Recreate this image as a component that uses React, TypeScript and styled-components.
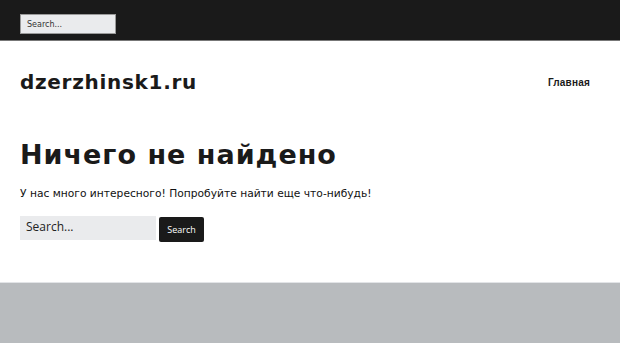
import React from "react";
import styled, { createGlobalStyle } from "styled-components";

const Global = createGlobalStyle`
  html, body { margin: 0; padding: 0; background: #ffffff; }
  body { font-family: "DejaVu Sans", Verdana, sans-serif; color: #1a1a1a; }
  * { box-sizing: border-box; }
`;

const Page = styled.div`
  display: flex;
  flex-direction: column;
  min-height: 343px;
`;

const TopBar = styled.div`
  height: 41px;
  background: #1a1a1a;
  border-bottom: 1px solid #777;
  display: flex;
  align-items: flex-start;
  padding: 14px 20px 0;
`;

const TopSearch = styled.div`
  width: 96px;
  height: 20px;
  background: #eaebed;
  border: 1px solid #9a9a9a;
  font-family: "DejaVu Sans", sans-serif;
  font-size: 8px;
  color: #333;
  padding: 0 6px;
  display: flex;
  align-items: center;
`;

const Header = styled.header`
  display: flex;
  justify-content: space-between;
  align-items: center;
  padding: 0 30px 0 20px;
  height: 82px;
`;

const SiteTitle = styled.h1`
  margin: 0;
  font-size: 20px;
  font-weight: bold;
  letter-spacing: 0.7px;
  color: #1a1a1a;
`;

const NavLink = styled.a`
  font-family: "Liberation Sans", Arial, sans-serif;
  font-size: 10px;
  font-weight: bold;
  letter-spacing: 0.2px;
  color: #1a1a1a;
  text-decoration: none;
`;

const Main = styled.main`
  padding: 14px 20px 0;
  height: 159px;
`;

const Heading = styled.h2`
  margin: 0;
  font-size: 27px;
  font-weight: bold;
  letter-spacing: 1px;
  line-height: 36px;
  color: #1a1a1a;
`;

const Text = styled.p`
  margin: 13px 0 0;
  font-size: 10.7px;
  line-height: 16px;
  color: #111;
`;

const SearchRow = styled.form`
  display: flex;
  align-items: flex-start;
  gap: 3px;
  margin-top: 14px;
`;

const SearchField = styled.div`
  width: 136px;
  height: 24px;
  background: #eaebed;
  font-family: "Open Sans", sans-serif;
  font-size: 12px;
  color: #222;
  padding: 2px 6px 0;
`;

const SearchButton = styled.button`
  margin-top: 1px;
  width: 45px;
  height: 25px;
  background: #1a1a1a;
  color: #fff;
  border: none;
  border-radius: 2px;
  font-family: "Open Sans", sans-serif;
  font-size: 9px;
  padding: 0;
`;

const Footer = styled.footer`
  flex: 1;
  background: #b8bbbe;
  border-top: 1px solid #e2e4e7;
`;

export default function App() {
  return (
    <Page>
      <Global />
      <TopBar>
        <TopSearch>Search...</TopSearch>
      </TopBar>
      <Header>
        <SiteTitle>dzerzhinsk1.ru</SiteTitle>
        <NavLink href="#">Главная</NavLink>
      </Header>
      <Main>
        <Heading>Ничего не найдено</Heading>
        <Text>У нас много интересного! Попробуйте найти еще что-нибудь!</Text>
        <SearchRow onSubmit={(e) => e.preventDefault()}>
          <SearchField>Search...</SearchField>
          <SearchButton type="submit">Search</SearchButton>
        </SearchRow>
      </Main>
      <Footer />
    </Page>
  );
}
